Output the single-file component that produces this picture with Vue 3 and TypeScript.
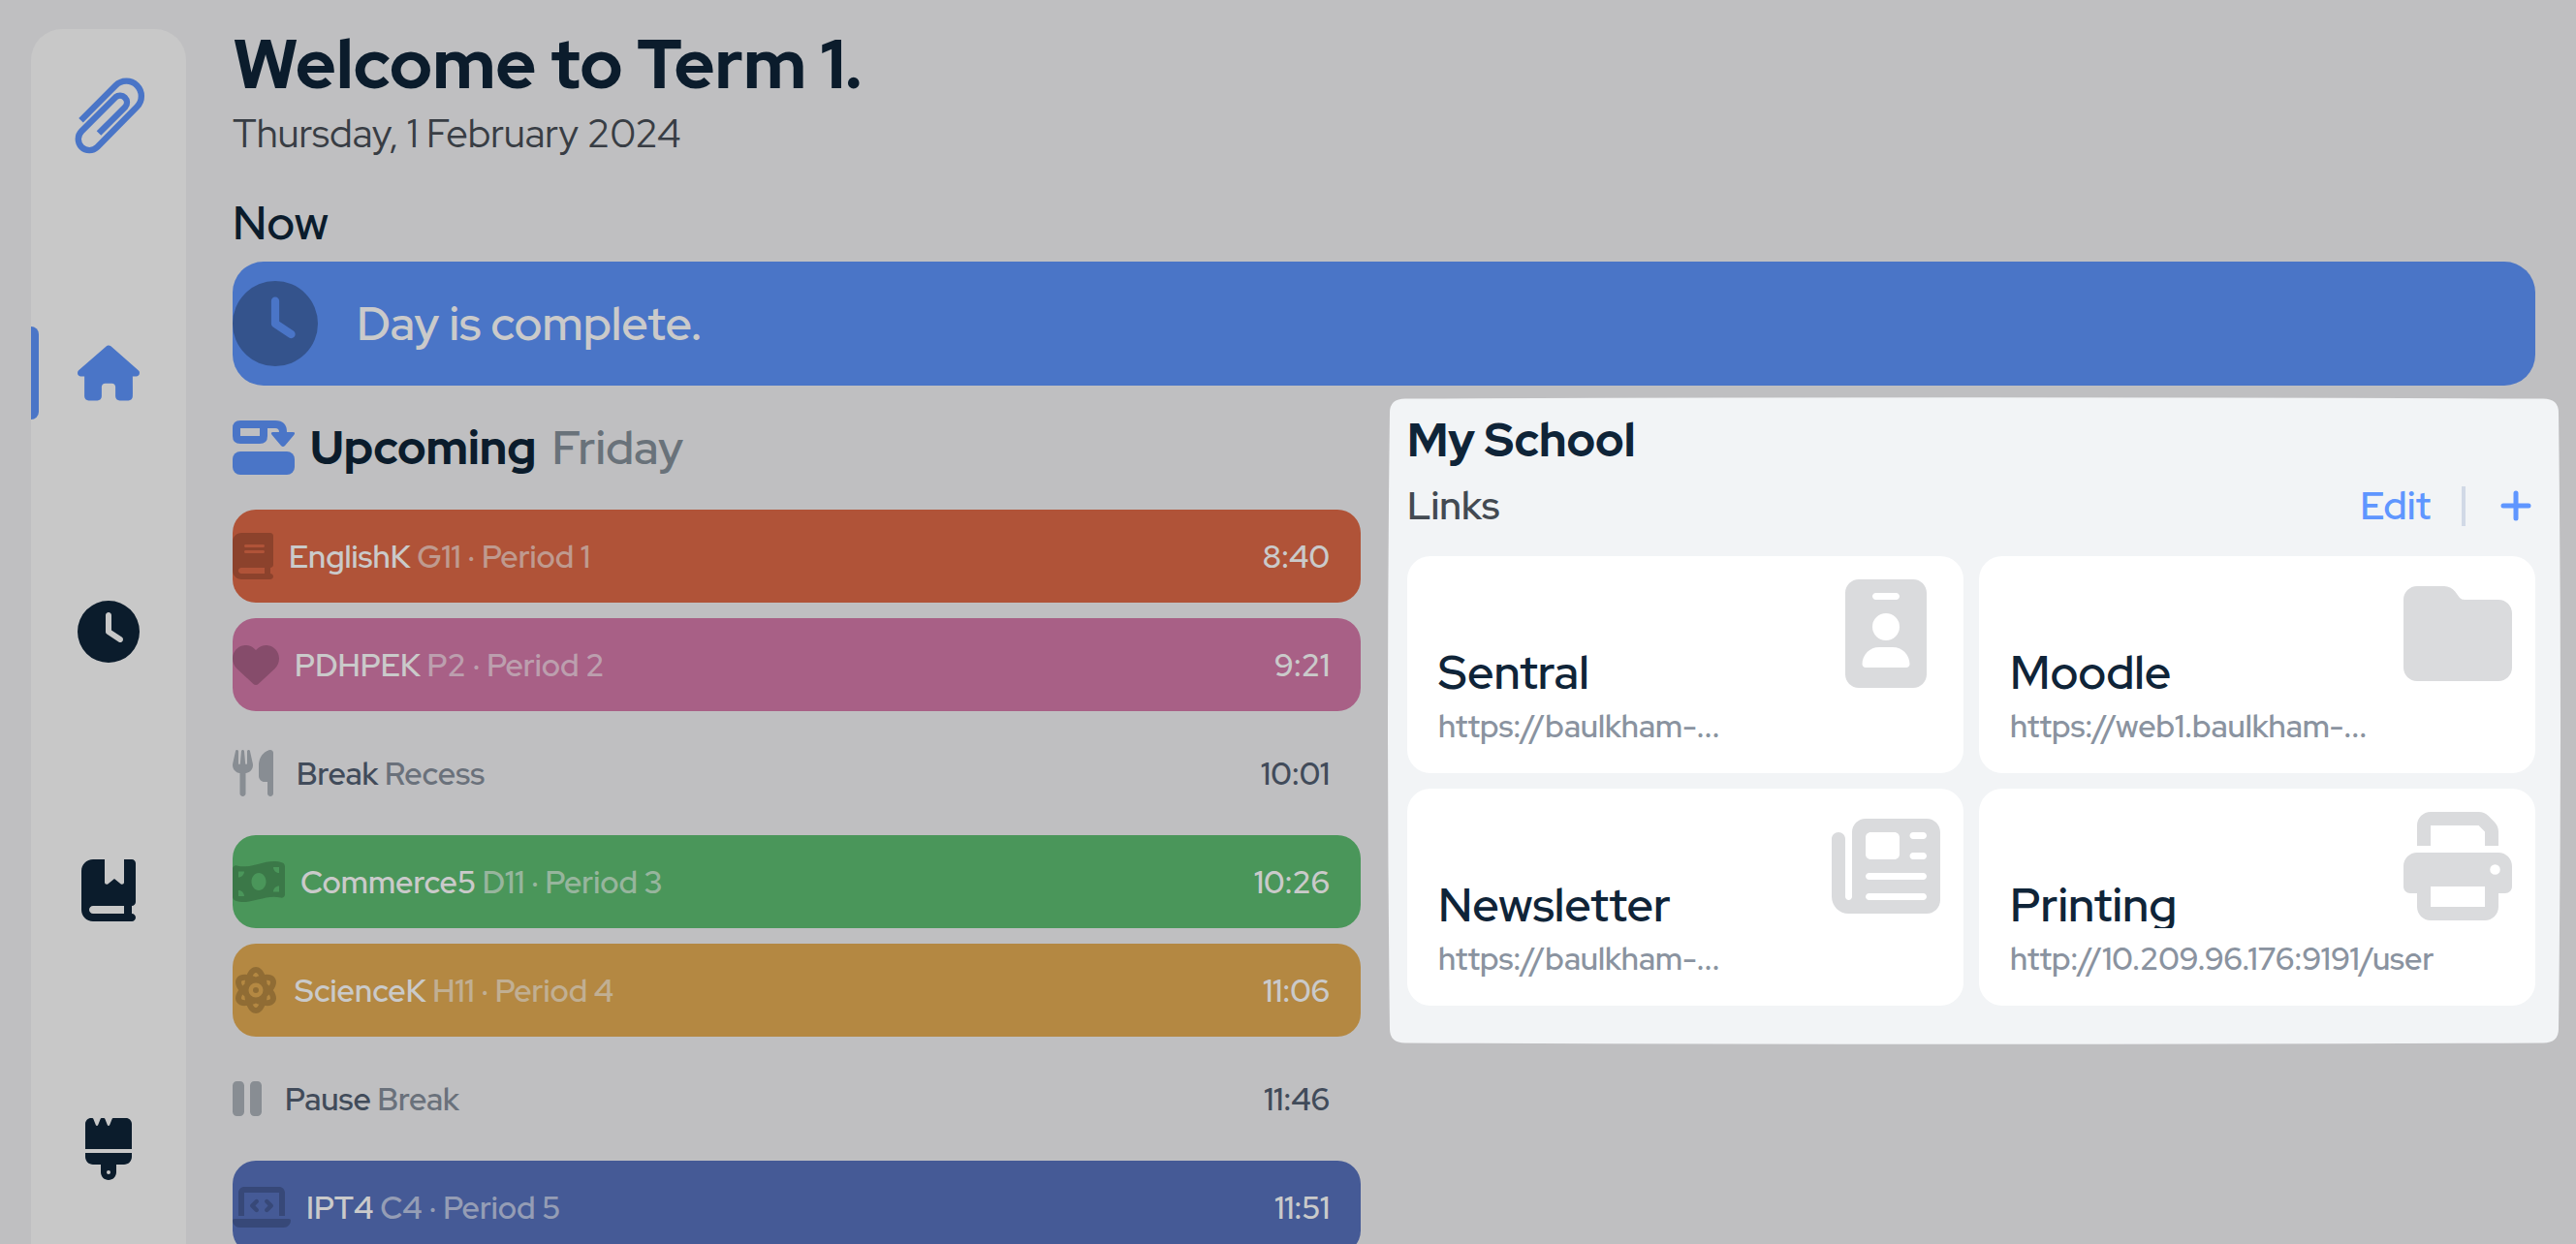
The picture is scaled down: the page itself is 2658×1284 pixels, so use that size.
<script setup lang="ts">
interface Icon {
  width: number
  path: string
}

interface Lesson {
  name: string
  detail: string
  time: string
  icon: Icon
  tone: string
}

interface SchoolLink {
  title: string
  label: string
  href: string
  icon: Icon
}

const icons: Record<string, Icon> = {
  house: {
    width: 576,
    path: 'M575.8 255.5c0 18-15 32.1-32 32.1h-32l.7 160.2c0 2.7-.2 5.4-.5 8.1V472c0 22.1-17.9 40-40 40H456c-1.1 0-2.2 0-3.3-.1c-1.4 .1-2.8 .1-4.2 .1H416 392c-22.1 0-40-17.9-40-40V448 384c0-17.7-14.3-32-32-32H256c-17.7 0-32 14.3-32 32v64 24c0 22.1-17.9 40-40 40H160 128.1c-1.5 0-3-.1-4.5-.2c-1.2 .1-2.4 .2-3.6 .2H104c-22.1 0-40-17.9-40-40V360c0-.9 0-1.9 .1-2.8V287.6H32c-18 0-32-14-32-32.1c0-9 3-17 10-24L266.4 8c7-7 15-8 22-8s15 2 21 7L564.8 231.5c8 7 12 15 11 24z',
  },
  clock: {
    width: 512,
    path: 'M256 0a256 256 0 1 1 0 512A256 256 0 1 1 256 0zM232 120V256c0 8 4 15.5 10.7 20l96 64c11 7.4 25.9 4.4 33.3-6.7s4.4-25.9-6.7-33.3L280 243.2V120c0-13.3-10.7-24-24-24s-24 10.7-24 24z',
  },
  bookmark: {
    width: 448,
    path: 'M0 96C0 43 43 0 96 0h96V190.7c0 13.4 15.5 20.9 26 12.5L272 160l54 43.2c10.5 8.4 26 .9 26-12.5V0h32 32c17.7 0 32 14.3 32 32V352c0 17.7-14.3 32-32 32v64c17.7 0 32 14.3 32 32s-14.3 32-32 32H384 96c-53 0-96-43-96-96V96zM64 416c0 17.7 14.3 32 32 32H352V384H96c-17.7 0-32 14.3-32 32z',
  },
  brush: {
    width: 384,
    path: 'M162.4 6c-1.5-3.6-5-6-8.9-6h-19c-3.9 0-7.5 2.4-8.9 6L104.9 57.7c-3.2 8-14.6 8-17.8 0L66.4 6c-1.5-3.6-5-6-8.9-6H48C21.5 0 0 21.5 0 48V224v22.4V256H9.6 374.4 384v-9.6V224 48c0-26.5-21.5-48-48-48H230.5c-3.9 0-7.5 2.4-8.9 6L200.9 57.7c-3.2 8-14.6 8-17.8 0L162.4 6zM0 288v32c0 35.3 28.7 64 64 64h64v64c0 35.3 28.7 64 64 64s64-28.7 64-64V384h64c35.3 0 64-28.7 64-64V288H0zM192 432a16 16 0 1 1 0 32 16 16 0 1 1 0-32z',
  },
  book: {
    width: 448,
    path: 'M96 0C43 0 0 43 0 96V416c0 53 43 96 96 96H384h32c17.7 0 32-14.3 32-32s-14.3-32-32-32V384c17.7 0 32-14.3 32-32V32c0-17.7-14.3-32-32-32H384 96zm0 384H352v64H96c-17.7 0-32-14.3-32-32s14.3-32 32-32zm32-240c0-8.8 7.2-16 16-16H336c8.8 0 16 7.2 16 16s-7.2 16-16 16H144c-8.8 0-16-7.2-16-16zm16 48H336c8.8 0 16 7.2 16 16s-7.2 16-16 16H144c-8.8 0-16-7.2-16-16s7.2-16 16-16z',
  },
  heart: {
    width: 512,
    path: 'M47.6 300.4L228.3 469.1c7.5 7 17.4 10.9 27.7 10.9s20.2-3.9 27.7-10.9L464.4 300.4c30.4-28.3 47.6-68 47.6-109.5v-5.8c0-69.9-50.5-129.5-119.4-141C347 36.5 300.6 51.4 268 84L256 96 244 84c-32.6-32.6-79-47.5-124.6-39.9C50.5 55.6 0 115.2 0 185.1v5.8c0 41.5 17.2 81.2 47.6 109.5z',
  },
  utensils: {
    width: 448,
    path: 'M416 0C400 0 288 32 288 176V288c0 35.3 28.7 64 64 64h32V480c0 17.7 14.3 32 32 32s32-14.3 32-32V352 240 32c0-17.7-14.3-32-32-32zM64 16C64 7.8 57.9 1 49.7 .1S34.2 4.6 32.4 12.5L2.1 148.8C.7 155.1 0 161.5 0 167.9c0 45.9 35.1 83.6 80 87.7V480c0 17.7 14.3 32 32 32s32-14.3 32-32V255.6c44.9-4.1 80-41.8 80-87.7c0-6.4-.7-12.8-2.1-19.1L191.6 12.5c-1.8-8-9.3-13.3-17.4-12.4S160 7.8 160 16V150.2c0 5.4-4.4 9.8-9.8 9.8c-5.1 0-9.3-3.9-9.8-9L127.9 14.6C127.2 6.3 120.3 0 112 0s-15.2 6.3-15.9 14.6L83.7 151c-.5 5.1-4.7 9-9.8 9c-5.4 0-9.8-4.4-9.8-9.8V16z',
  },
  money: {
    width: 576,
    path: 'M0 112.5V422.3c0 18 10.1 35 27 41.3c87 32.5 174 10.3 261-11.9c79.8-20.3 159.6-40.7 239.3-18.9c23 6.3 48.7-9.5 48.7-33.4V89.7c0-18-10.1-35-27-41.3C462 15.9 375 38.1 288 60.3C208.2 80.6 128.4 100.9 48.7 79.1C25.6 72.8 0 88.6 0 112.5zM288 352c-44.2 0-80-43-80-96s35.8-96 80-96s80 43 80 96s-35.8 96-80 96zM64 352c35.3 0 64 28.7 64 64H64V352zm64-208c0 35.3-28.7 64-64 64V144h64zM512 304v64H448c0-35.3 28.7-64 64-64zM448 96h64v64c-35.3 0-64-28.7-64-64z',
  },
  atom: {
    width: 512,
    path: 'M256 398.8c-11.8 5.1-23.4 9.7-34.9 13.5c16.7 33.8 31 35.7 34.9 35.7s18.1-1.9 34.9-35.7c-11.4-3.9-23.1-8.4-34.9-13.5zM446 256c33 45.2 44.3 90.9 23.6 128c-20.2 36.3-62.5 49.3-115.2 43.2c-22 52.1-55.6 84.8-98.4 84.8s-76.4-32.7-98.4-84.8c-52.7 6.1-95-6.8-115.2-43.2C21.7 346.9 33 301.2 66 256c-33-45.2-44.3-90.9-23.6-128c20.2-36.3 62.5-49.3 115.2-43.2C179.6 32.7 213.2 0 256 0s76.4 32.7 98.4 84.8c52.7-6.1 95 6.8 115.2 43.2c20.7 37.1 9.4 82.8-23.6 128zm-65.8 67.4c-1.7 14.2-3.9 28-6.7 41.2c31.8 1.4 38.6-8.7 40.2-11.7c2.3-4.2 7-17.9-11.9-48.1c-6.8 6.3-14 12.5-21.6 18.6zm-6.7-175.9c2.8 13.1 5 26.9 6.7 41.2c7.6 6.1 14.8 12.3 21.6 18.6c18.9-30.2 14.2-44 11.9-48.1c-1.6-2.9-8.4-13-40.2-11.7zM290.9 99.7C274.1 65.9 259.9 64 256 64s-18.1 1.9-34.9 35.7c11.4 3.9 23.1 8.4 34.9 13.5c11.8-5.1 23.4-9.7 34.9-13.5zm-159 88.9c1.7-14.3 3.9-28 6.7-41.2c-31.8-1.4-38.6 8.7-40.2 11.7c-2.3 4.2-7 17.9 11.9 48.1c6.8-6.3 14-12.5 21.6-18.6zM110.2 304.8C91.4 335 96 348.7 98.3 352.9c1.6 2.9 8.4 13 40.2 11.7c-2.8-13.1-5-26.9-6.7-41.2c-7.6-6.1-14.8-12.3-21.6-18.6zM336 256a80 80 0 1 0 -160 0 80 80 0 1 0 160 0zm-80-32a32 32 0 1 1 0 64 32 32 0 1 1 0-64z',
  },
  pause: {
    width: 320,
    path: 'M48 64C21.5 64 0 85.5 0 112V400c0 26.5 21.5 48 48 48H80c26.5 0 48-21.5 48-48V112c0-26.5-21.5-48-48-48H48zm192 0c-26.5 0-48 21.5-48 48V400c0 26.5 21.5 48 48 48h32c26.5 0 48-21.5 48-48V112c0-26.5-21.5-48-48-48H240z',
  },
  laptop: {
    width: 640,
    path: 'M64 96c0-35.3 28.7-64 64-64H512c35.3 0 64 28.7 64 64V352H512V96H128V352H64V96zM0 403.2C0 392.6 8.6 384 19.2 384H620.8c10.6 0 19.2 8.6 19.2 19.2c0 42.4-34.4 76.8-76.8 76.8H76.8C34.4 480 0 445.6 0 403.2zM281 209l-31 31 31 31c9.4 9.4 9.4 24.6 0 33.9s-24.6 9.4-33.9 0l-48-48c-9.4-9.4-9.4-24.6 0-33.9l48-48c9.4-9.4 24.6-9.4 33.9 0s9.4 24.6 0 33.9zM393 175l48 48c9.4 9.4 9.4 24.6 0 33.9l-48 48c-9.4 9.4-24.6 9.4-33.9 0s-9.4-24.6 0-33.9l31-31-31-31c-9.4-9.4-9.4-24.6 0-33.9s24.6-9.4 33.9 0z',
  },
  badge: {
    width: 384,
    path: 'M64 0C28.7 0 0 28.7 0 64V448c0 35.3 28.7 64 64 64H320c35.3 0 64-28.7 64-64V64c0-35.3-28.7-64-64-64H64zm96 320h64c44.2 0 80 35.8 80 80c0 8.8-7.2 16-16 16H96c-8.8 0-16-7.2-16-16c0-44.2 35.8-80 80-80zm-32-96a64 64 0 1 1 128 0 64 64 0 1 1 -128 0zM144 64h96c8.8 0 16 7.2 16 16s-7.2 16-16 16H144c-8.8 0-16-7.2-16-16s7.2-16 16-16z',
  },
  folder: {
    width: 512,
    path: 'M64 480H448c35.3 0 64-28.7 64-64V160c0-35.3-28.7-64-64-64H288c-10.1 0-19.6-4.7-25.6-12.8L243.2 57.6C231.1 41.5 212.1 32 192 32H64C28.7 32 0 60.7 0 96V416c0 35.3 28.7 64 64 64z',
  },
  newspaper: {
    width: 512,
    path: 'M96 96c0-35.3 28.7-64 64-64H448c35.3 0 64 28.7 64 64V416c0 35.3-28.7 64-64 64H80c-44.2 0-80-35.8-80-80V128c0-17.7 14.3-32 32-32s32 14.3 32 32V400c0 8.8 7.2 16 16 16s16-7.2 16-16V96zm64 24v80c0 13.3 10.7 24 24 24H296c13.3 0 24-10.7 24-24V120c0-13.3-10.7-24-24-24H184c-13.3 0-24 10.7-24 24zm208-8c0 8.8 7.2 16 16 16h48c8.8 0 16-7.2 16-16s-7.2-16-16-16H384c-8.8 0-16 7.2-16 16zm0 96c0 8.8 7.2 16 16 16h48c8.8 0 16-7.2 16-16s-7.2-16-16-16H384c-8.8 0-16 7.2-16 16zM160 304c0 8.8 7.2 16 16 16H432c8.8 0 16-7.2 16-16s-7.2-16-16-16H176c-8.8 0-16 7.2-16 16zm0 96c0 8.8 7.2 16 16 16H432c8.8 0 16-7.2 16-16s-7.2-16-16-16H176c-8.8 0-16 7.2-16 16z',
  },
  print: {
    width: 512,
    path: 'M128 0C92.7 0 64 28.7 64 64v96h64V64H354.7L384 93.3V160h64V93.3c0-17-6.7-33.3-18.7-45.3L400 18.7C388 6.7 371.7 0 354.7 0H128zM384 352v32 64H128V384 368 352H384zm64 32h32c17.7 0 32-14.3 32-32V256c0-35.3-28.7-64-64-64H64c-35.3 0-64 28.7-64 64v96c0 17.7 14.3 32 32 32H64v64c0 35.3 28.7 64 64 64H384c35.3 0 64-28.7 64-64V384zM432 248a24 24 0 1 1 0 48 24 24 0 1 1 0-48z',
  },
}

const nav = [
  { label: 'Home', icon: icons.house, active: true },
  { label: 'Timetable', icon: icons.clock, active: false },
  { label: 'Subjects', icon: icons.bookmark, active: false },
  { label: 'Appearance', icon: icons.brush, active: false },
]

const lessons: Lesson[] = [
  { name: 'EnglishK', detail: 'G11 · Period 1', time: '8:40', icon: icons.book, tone: 'red' },
  { name: 'PDHPEK', detail: 'P2 · Period 2', time: '9:21', icon: icons.heart, tone: 'pink' },
  { name: 'Break', detail: 'Recess', time: '10:01', icon: icons.utensils, tone: 'plain' },
  { name: 'Commerce5', detail: 'D11 · Period 3', time: '10:26', icon: icons.money, tone: 'green' },
  { name: 'ScienceK', detail: 'H11 · Period 4', time: '11:06', icon: icons.atom, tone: 'gold' },
  { name: 'Pause', detail: 'Break', time: '11:46', icon: icons.pause, tone: 'plain' },
  { name: 'IPT4', detail: 'C4 · Period 5', time: '11:51', icon: icons.laptop, tone: 'indigo' },
]

const links: SchoolLink[] = [
  { title: 'Sentral', label: 'https://baulkham-...', href: '#sentral', icon: icons.badge },
  { title: 'Moodle', label: 'https://web1.baulkham-...', href: '#moodle', icon: icons.folder },
  { title: 'Newsletter', label: 'https://baulkham-...', href: '#newsletter', icon: icons.newspaper },
  { title: 'Printing', label: 'http://10.209.96.176:9191/user', href: '#printing', icon: icons.print },
]
</script>

<template>
  <div class="app">
    <nav class="sidebar" aria-label="Main">
      <svg class="logo" viewBox="76 80 74 79" aria-hidden="true">
        <path d="M83.5 124.2L119.3 88.2A15.5 15.5 0 0 1 141.3 110.2L100.4 151.8A11.5 11.5 0 0 1 84.2 135.4L119.3 100.3A7.1 7.1 0 0 1 129.3 110.3L102 137.5" />
      </svg>
      <a
        v-for="item in nav"
        :key="item.label"
        href="#"
        class="nav-link"
        :class="{ active: item.active }"
        :aria-label="item.label"
      >
        <svg :viewBox="`0 0 ${item.icon.width} 512`" aria-hidden="true"><path :d="item.icon.path" /></svg>
      </a>
    </nav>

    <main class="content">
      <h1>Welcome to Term 1.</h1>
      <p class="date">Thursday, 1 February 2024</p>

      <h2 class="now">Now</h2>
      <div class="banner">
        <svg viewBox="0 0 512 512" aria-hidden="true"><path :d="icons.clock.path" /></svg>
        <span>Day is complete.</span>
      </div>

      <div class="columns">
        <section class="upcoming">
          <h2 class="upcoming-title">
            <svg viewBox="0 0 64 56" aria-hidden="true">
              <path
                fill-rule="evenodd"
                d="M8 0H44Q56 0 56 12H62Q65.5 12 63.3 15L54 26Q52 28 50 26L40.7 15Q38.5 12 42 12H48Q48 8 44 8H36V16Q36 24 28 24H8Q0 24 0 16V8Q0 0 8 0ZM8 8V16H28V8Z"
              />
              <rect y="32" width="64" height="24" rx="8" />
            </svg>
            <span>Upcoming</span>
            <span class="day">Friday</span>
          </h2>
          <ul class="lessons">
            <li v-for="lesson in lessons" :key="lesson.time" class="lesson" :class="lesson.tone">
              <svg :viewBox="`0 0 ${lesson.icon.width} 512`" aria-hidden="true"><path :d="lesson.icon.path" /></svg>
              <span class="lesson-text">
                {{ lesson.name }} <span class="detail">{{ lesson.detail }}</span>
              </span>
              <time>{{ lesson.time }}</time>
            </li>
          </ul>
        </section>

        <section class="panel">
          <svg class="panel-shape" viewBox="0 0 1210 669" preserveAspectRatio="none" aria-hidden="true">
            <path d="M18 1.500Q605 -1 1192 1.500Q1208 1.500 1208 16Q1212 334 1208 653Q1208 667.500 1192 667.500Q605 670 18 667.500Q2 667.500 2 653Q-2 334 2 16Q2 1.500 18 1.500Z" />
          </svg>
          <h2 class="panel-title">My School</h2>
          <div class="panel-bar">
            <h3>Links</h3>
            <div class="actions">
              <button type="button" class="edit">Edit</button>
              <span class="divider"></span>
              <button type="button" class="add" aria-label="Add link">
                <svg viewBox="0 0 32 32" aria-hidden="true"><path d="M16 3V29M3 16H29" /></svg>
              </button>
            </div>
          </div>
          <div class="cards">
            <a v-for="link in links" :key="link.title" :href="link.href" class="card">
              <svg :viewBox="`0 0 ${link.icon.width} 512`" aria-hidden="true"><path :d="link.icon.path" /></svg>
              <span class="card-title">{{ link.title }}</span>
              <span class="card-url">{{ link.label }}</span>
            </a>
          </div>
        </section>
      </div>
    </main>
  </div>
</template>

<style>
body {
  background: #bfbfc1;
}
</style>

<style scoped>
.app {
  display: flex;
  height: 100vh;
  overflow: hidden;
  background: #bfbfc1;
  color: #0b1c2c;
  font-family: 'Red Hat Display', Lato, sans-serif;
  font-weight: 600;
}

h1,
h2,
h3,
p,
ul {
  margin: 0;
  padding: 0;
}

svg {
  display: block;
  fill: currentColor;
}

.sidebar {
  flex: none;
  display: flex;
  flex-direction: column;
  width: 160px;
  margin: 30px 0 0 32px;
  border-radius: 32px 32px 0 0;
  background: #c8c8c8;
}

.logo {
  flex: none;
  width: 74px;
  height: 79px;
  margin: 50px auto 178px 44px;
  fill: none;
  stroke: #4a75c7;
  stroke-width: 6.4;
}

.nav-link {
  flex: none;
  display: flex;
  align-items: center;
  justify-content: center;
  height: 96px;
  margin-bottom: 171px;
  color: #0b1c2c;
}

.nav-link svg {
  height: 64px;
  max-width: 64px;
}

.nav-link.active {
  position: relative;
  color: #4a75c7;
}

.nav-link.active::before {
  content: '';
  position: absolute;
  left: 0;
  width: 8px;
  height: 96px;
  border-radius: 0 8px 8px 0;
  background: #4a75c7;
}

.content {
  flex: 1;
  min-width: 0;
  padding: 26px 42px 0 48px;
}

h1 {
  font-size: 72px;
  line-height: 80px;
  font-weight: 800;
}

.date {
  margin-top: 8px;
  font-size: 40px;
  line-height: 48px;
  font-weight: 400;
  color: #383d44;
}

.now {
  margin: 40px 0 12px;
  font-size: 48px;
  line-height: 56px;
  font-weight: 600;
}

.banner {
  display: flex;
  align-items: center;
  gap: 40px;
  height: 128px;
  border-radius: 32px;
  background: #4a75c7;
  color: #cacaca;
  font-size: 48px;
}

.banner svg {
  width: 88px;
  height: 88px;
  color: #34538c;
}

.columns {
  display: grid;
  grid-template-columns: 1fr 1fr;
  gap: 48px;
  align-items: start;
  margin-top: 12px;
}

.upcoming {
  padding-top: 24px;
}

.upcoming-title {
  display: flex;
  align-items: center;
  gap: 16px;
  margin-bottom: 36px;
  font-size: 48px;
  line-height: 56px;
  font-weight: 800;
}

.upcoming-title svg {
  width: 64px;
  height: 56px;
  color: #4a75c7;
}

.day {
  font-weight: 600;
  color: #69727a;
}

.lessons {
  display: flex;
  flex-direction: column;
  gap: 16px;
  list-style: none;
}

.lesson {
  display: flex;
  align-items: center;
  gap: 16px;
  height: 96px;
  padding-right: 32px;
  border-radius: 24px;
  color: #cacaca;
  font-size: 32px;
}

.lesson svg {
  height: 48px;
  color: rgba(0, 0, 0, 0.2);
}

.lesson-text {
  flex: 1;
}

.detail {
  opacity: 0.6;
}

.red {
  background: #b05338;
}

.pink {
  background: #a86086;
}

.green {
  background: #4a965a;
}

.gold {
  background: #b48842;
}

.indigo {
  background: #455a96;
}

.plain {
  gap: 24px;
  color: #414b5a;
}

.plain svg {
  color: #888d93;
}

.plain .detail {
  color: #6a717b;
  opacity: 1;
}

.panel {
  position: relative;
  margin: 0 -26px 0 -20px;
  padding: 16px 26px 40px 20px;
  color: #0f2438;
}

.panel-shape {
  position: absolute;
  inset: 0;
  width: 100%;
  height: 100%;
  color: #f2f4f6;
}

.panel-title {
  position: relative;
  font-size: 48px;
  line-height: 56px;
  font-weight: 800;
}

.panel-bar {
  position: relative;
  display: flex;
  align-items: center;
  justify-content: space-between;
  height: 48px;
  margin: 16px 0 28px;
}

h3 {
  font-size: 40px;
  line-height: 48px;
  font-weight: 600;
  color: #434a52;
}

.actions {
  display: flex;
  align-items: center;
  gap: 32px;
}

button {
  padding: 0;
  border: 0;
  background: none;
  color: #5f96ff;
  font-family: inherit;
  font-size: 40px;
  line-height: 48px;
  font-weight: 600;
}

.divider {
  width: 4px;
  height: 41px;
  background: #d1d9e6;
}

.add {
  margin: 0 4px;
}

.add svg {
  width: 32px;
  height: 32px;
  fill: none;
  stroke: currentColor;
  stroke-width: 5;
  stroke-linecap: round;
}

.cards {
  position: relative;
  display: grid;
  grid-template-columns: 1fr 1fr;
  gap: 16px;
}

.card {
  position: relative;
  display: flex;
  flex-direction: column;
  justify-content: flex-end;
  height: 224px;
  box-sizing: border-box;
  padding: 0 32px 28px;
  border-radius: 24px;
  background: #fff;
  color: inherit;
  text-decoration: none;
}

.card svg {
  position: absolute;
  top: 24px;
  right: 24px;
  width: 112px;
  height: 112px;
  color: #dadbdd;
}

.card-title {
  overflow: hidden;
  font-size: 48px;
  line-height: 48px;
}

.card-url {
  margin-top: 12px;
  font-size: 32px;
  line-height: 40px;
  color: #8a93a0;
}
</style>
